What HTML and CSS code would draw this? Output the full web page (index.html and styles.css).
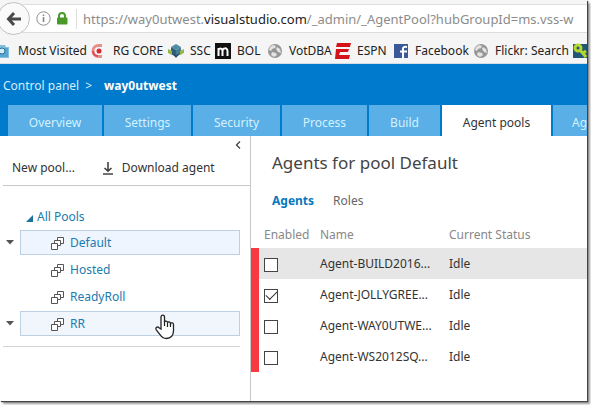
FILE: index.html
```html
<!DOCTYPE html>
<html lang="en">
<head>
<meta charset="utf-8">
<title>Agent pools</title>
<link rel="stylesheet" href="styles.css">
</head>
<body>
<div class="window">
  <div class="chrome">
    <div class="address-row">
      <button class="back" aria-label="Back"><svg width="16" height="16" viewBox="0 0 16 16"><path d="M8 2 2.500 8 8 14M3 8H15" fill="none" stroke="#4a4a4a" stroke-width="3"/></svg></button>
      <div class="address">
        <svg class="info" width="15" height="15" viewBox="0 0 15 15"><circle cx="7.500" cy="7.500" r="6.700" fill="none" stroke="#919191"/><path d="M7.500 6v5M7.500 3.500v1.500" stroke="#808080" stroke-width="1.500"/></svg>
        <svg class="lock" width="12" height="13" viewBox="0 0 12 13"><path d="M3 6V4a3 3 0 0 1 6 0v2" fill="none" stroke="#4a9a2a" stroke-width="2"/><rect x="1" y="5.500" width="10.500" height="7" rx="1" fill="#4a9a2a"/></svg>
        <span class="url">https://way0utwest.<b>visualstudio.com</b>/_admin/_AgentPool?hubGroupId=ms.vss-w</span>
      </div>
    </div>
    <nav class="bookmarks" aria-label="Bookmarks">
      <a href="#"><svg width="16" height="16" viewBox="0 0 16 16"><path d="M0 2h9l1 2h3v11H0z" fill="#80bfe0"/><path d="M0 5h12v9H0z" fill="#58a5d0"/><circle cx="6" cy="8" r="3" fill="#d5edf8" stroke="#286f9d"/><path d="m4 10-3 3" stroke="#286f9d" stroke-width="2"/></svg>Most Visited</a>
      <a href="#"><svg width="16" height="16" viewBox="0 0 16 16"><path d="M11 2.500H7.500a5.500 5.500 0 0 0 0 11H11" fill="none" stroke="#e88c8c" stroke-width="3"/><path d="M2 8a5 5 0 0 0 5 5" fill="none" stroke="#dc4c50" stroke-width="2"/><circle cx="8" cy="8" r="2.500" fill="#d42a32"/></svg>RG CORE</a>
      <a href="#"><svg width="16" height="16" viewBox="0 0 16 16"><path d="m8 1 5 3-5 3-5-3z" fill="#518ca5"/><path d="m3 4 5 3v7l-5-3z" fill="#315d76"/><path d="m13 4-5 3v7l5-3z" fill="#447c94"/><path d="m0 6 4 2v4l-4-2zm16 0-4 2v4l4-2z" fill="#95b748"/><path d="m4 10 4 2 4-2-4 5z" fill="#294f69"/></svg>SSC</a>
      <a href="#"><svg width="16" height="16" viewBox="0 0 16 16"><path d="M0 0h16v16H0z" fill="#111"/><path d="M3.500 13V5M3.500 7c1-2 4-2 4 1v5M7.500 8c0-3 5-4 5 0v5" fill="none" stroke="#fff" stroke-width="2"/></svg>BOL</a>
      <a href="#"><svg width="16" height="16" viewBox="0 0 16 16"><circle cx="8" cy="8" r="7" fill="#969696"/><path d="m3 4 3-2 3 1-1 2-3 1-1 2-2-1zm7 0 3 2 1 4-3-1-2-3zM5 9l4 1 1 2-3 2-3-2z" fill="#e3e3e3"/></svg>VotDBA</a>
      <a href="#"><svg width="16" height="16" viewBox="0 0 16 16"><path d="M2 0h14l-1 4H1zM1 6h13l-1 3H5l-1 3h11l-1 4H0z" fill="#d31319"/></svg>ESPN</a>
      <a href="#"><svg width="16" height="16" viewBox="0 0 16 16"><path d="M1 1h14v14H1z" fill="#3b5998"/><path d="M10 15V6c0-2 1-2.500 4-2M7 8.500h7" fill="none" stroke="#fff" stroke-width="2"/></svg>Facebook</a>
      <a href="#"><svg width="16" height="16" viewBox="0 0 16 16"><circle cx="8" cy="8" r="7" fill="#969696"/><path d="m3 4 3-2 3 1-1 2-3 1-1 2-2-1zm7 0 3 2 1 4-3-1-2-3zM5 9l4 1 1 2-3 2-3-2z" fill="#e3e3e3"/></svg>Flickr: Search</a>
      <a href="#" aria-label="Bookmark"><svg width="16" height="16" viewBox="0 0 16 16"><path d="M0 1h15v14H0z" fill="#205776"/><circle cx="5" cy="5" r="3" fill="none" stroke="#b6d52f" stroke-width="3"/><path d="m7 7 6 7M10 10l3-2" stroke="#b6d52f" stroke-width="3"/></svg></a>
    </nav>
  </div>
  <header class="hub">
    <div class="crumbs"><a href="#">Control panel</a><span>&gt;</span><strong>way0utwest</strong></div>
    <nav class="tabs" aria-label="Hubs">
      <a href="#">Overview</a><a href="#">Settings</a><a href="#">Security</a><a href="#">Process</a><a href="#">Build</a><a href="#" class="active" aria-current="page">Agent pools</a><a href="#" class="last">Ag</a>
    </nav>
  </header>
  <main class="content">
    <aside class="side">
      <div class="collapse-row"><button aria-label="Collapse"><svg width="6" height="8" viewBox="0 0 6 8"><path d="M5 .5 1.500 4 5 7.500" fill="none" stroke="#444" stroke-width="1.300"/></svg></button></div>
      <div class="toolbar">
        <button>New pool...</button>
        <button><svg width="10" height="13" viewBox="0 0 10 13"><path d="M5 0v9M1.500 6 5 9.200 8.500 6M0 12h10" fill="none" stroke="#444" stroke-width="1.600"/></svg>Download agent</button>
      </div>
      <div class="tree">
        <a class="root" href="#"><svg width="7" height="7" viewBox="0 0 7 7"><path d="M7 0v7H0z" fill="#1b7199"/></svg>All Pools</a>
        <div class="node selected"><button aria-label="Default menu"><svg width="8" height="5" viewBox="0 0 8 5"><path d="M0 0h8L4 4.500z" fill="#555"/></svg></button><a href="#"><svg width="13" height="13" viewBox="0 0 13 13"><g fill="#fff" stroke="#555"><path d="M6.500.5h6v6h-6z"/><path d="M3.500 3.500h6v5h-6z"/><path d="M.5 6.500h6v6h-6z"/></g></svg>Default</a></div>
        <div class="node"><a href="#"><svg width="13" height="13" viewBox="0 0 13 13"><g fill="#fff" stroke="#555"><path d="M6.500.5h6v6h-6z"/><path d="M3.500 3.500h6v5h-6z"/><path d="M.5 6.500h6v6h-6z"/></g></svg>Hosted</a></div>
        <div class="node"><a href="#"><svg width="13" height="13" viewBox="0 0 13 13"><g fill="#fff" stroke="#555"><path d="M6.500.5h6v6h-6z"/><path d="M3.500 3.500h6v5h-6z"/><path d="M.5 6.500h6v6h-6z"/></g></svg>ReadyRoll</a></div>
        <div class="node hovered"><button aria-label="RR menu"><svg width="8" height="5" viewBox="0 0 8 5"><path d="M0 0h8L4 4.500z" fill="#555"/></svg></button><a href="#"><svg width="13" height="13" viewBox="0 0 13 13"><g fill="#fff" stroke="#555"><path d="M6.500.5h6v6h-6z"/><path d="M3.500 3.500h6v5h-6z"/><path d="M.5 6.500h6v6h-6z"/></g></svg>RR</a>
          <svg class="pointer" width="20" height="26" viewBox="0 0 20 26"><path d="M6 15V3.200C6 .4 9.500.4 9.500 3.200V8c.5-1.300 3-1 3 .6.600-1.200 3-.8 3 .8.700-1 3-.6 3 1.200V17c0 4-2.500 7.500-7 7.500-3.500 0-5-1.500-6.500-4L1.300 15.800C0 13.500 2.500 12.200 4 13.700z" fill="#fff" stroke="#222" stroke-width="1.300"/><path d="M9.500 7v5M12.500 8.500V13M15.500 9.500V13" stroke="#222" stroke-width="1.200"/></svg></div>
      </div>
    </aside>
    <section class="pane">
      <h1>Agents for pool Default</h1>
      <nav class="views" aria-label="Views"><a href="#" class="current">Agents</a><a href="#">Roles</a></nav>
      <table>
        <thead><tr><th class="enabled">Enabled</th><th class="name">Name</th><th>Current Status</th></tr></thead>
        <tbody>
          <tr class="highlight"><td><input type="checkbox" aria-label="Enable Agent-BUILD2016"></td><td>Agent-BUILD2016...</td><td>Idle</td></tr>
          <tr><td><input type="checkbox" checked aria-label="Enable Agent-JOLLYGREE"></td><td>Agent-JOLLYGREE...</td><td>Idle</td></tr>
          <tr><td><input type="checkbox" aria-label="Enable Agent-WAY0UTWE"></td><td>Agent-WAY0UTWE...</td><td>Idle</td></tr>
          <tr><td><input type="checkbox" aria-label="Enable Agent-WS2012SQ"></td><td>Agent-WS2012SQ...</td><td>Idle</td></tr>
        </tbody>
      </table>
    </section>
  </main>
</div>
</body>
</html>
```
FILE: styles.css
```css
* { box-sizing: border-box; }
body {
  margin: 0;
  padding: 0 4px 4px 0;
  background: #fff;
  color: #333;
  font: 12px/16px "Noto Sans", "Open Sans", sans-serif;
  overflow: hidden;
}
a { color: inherit; text-decoration: none; }
button { padding: 0; border: 0; background: none; color: inherit; font: inherit; }
svg { display: block; flex: none; }
.window {
  display: flex;
  flex-direction: column;
  min-height: calc(100vh - 4px);
  overflow: hidden;
  background: #fff;
  box-shadow: 1px 1px 1px #444, 3px 3px 2px #999;
}
.chrome { height: 64px; background: #f5f5f5; border-bottom: 1px solid #d4dce4; }
.address-row { display: flex; align-items: center; height: 37px; }
.back {
  z-index: 1;
  flex: none;
  display: grid;
  place-items: center;
  width: 33px;
  height: 33px;
  margin-left: -3px;
  border: 1px solid #c0c0c0;
  border-radius: 50%;
  background: #fafafa;
}
.address {
  flex: 1;
  min-width: 0;
  display: flex;
  align-items: center;
  height: 29px;
  margin-left: -8px;
  padding-left: 14px;
  background: #fff;
  border: solid #ddd;
  border-width: 1px 0;
  overflow: hidden;
}
.lock { margin-left: 5px; }
.url {
  margin-left: 8px;
  padding-left: 6px;
  border-left: 1px solid #ddd;
  color: #8c8c8c;
  font-size: 13px;
  line-height: 20px;
  white-space: nowrap;
}
.url b { color: #222; font-weight: 400; }
.bookmarks {
  display: grid;
  grid-template-columns: 95px 77px 47px 52px 68px 58px 80px 100px 16px;
  margin-left: -4px;
  padding-top: 6px;
  color: #222;
}
.bookmarks a { display: flex; align-items: center; gap: 6px; white-space: nowrap; }
.hub { background: #007acc; color: #fff; }
.crumbs { display: flex; gap: 6px; height: 41px; padding: 14px 3px 0; }
.crumbs a, .crumbs span { color: #d5edff; }
.crumbs strong { margin-left: 6px; }
.tabs {
  display: grid;
  grid-template-columns: 94px 87px 87px 85px 71px 109px 1fr;
  gap: 2px;
  height: 31px;
  padding-left: 8px;
}
.tabs a {
  padding-top: 10px;
  background: #5aafe6;
  color: #d5f1ff;
  text-align: center;
  white-space: nowrap;
}
.tabs .active { background: #fff; color: #333; }
.tabs .last { min-width: 0; padding-left: 19px; text-align: left; }
.content { flex: 1; display: flex; }
.side { width: 251px; flex: none; border-right: 1px solid #c8c8c8; }
.collapse-row { display: flex; justify-content: flex-end; padding: 5px 9px 0 0; }
.toolbar {
  display: flex;
  align-items: flex-end;
  gap: 28px;
  height: 37px;
  margin-left: 3px;
  padding: 0 9px 9px;
  border-bottom: 1px solid #c8c8c8;
}
.toolbar button { display: flex; align-items: center; gap: 9px; }
.tree {
  margin: 23px 10px 0 3px;
  padding-bottom: 9px;
  border-bottom: 1px solid #d4d4d4;
  color: #207bae;
}
.root { display: flex; align-items: center; gap: 4px; height: 16px; margin: 0 0 4px 23px; }
.root svg { margin-top: 3px; }
.node { position: relative; display: flex; align-items: center; height: 27px; }
.node button { width: 17px; padding-left: 3px; }
.node a {
  flex: 1;
  display: flex;
  align-items: center;
  gap: 6px;
  height: 25px;
  margin-left: 17px;
  padding-left: 30px;
  border: 1px solid transparent;
}
.node button + a { margin-left: 0; }
.node a svg { margin-top: 2px; }
.selected a { background: #eff5ff; border-color: #bcd0e2; }
.hovered a { background: #f1f6fd; border-color: #bcd0e2; }
.pointer { position: absolute; left: 152px; top: 4px; }
.pane { flex: 1; min-width: 0; }
h1 { margin: 15px 0 0 21px; color: #444; font-size: 17px; font-weight: 400; line-height: 24px; }
.views { display: flex; gap: 19px; margin: 18px 0 0 21px; color: #666; }
.views .current { color: #0878bd; font-weight: 700; }
table { width: 100%; margin-top: 12px; border-collapse: separate; border-spacing: 0; table-layout: fixed; white-space: nowrap; }
th { height: 27px; padding: 0; color: #888; font-weight: 400; text-align: left; }
th:first-child { padding-left: 13px; }
.enabled { width: 69px; }
.name { width: 129px; }
td { height: 31px; padding: 0; }
td:first-child { padding-left: 5px; border-left: 8px solid #f83a40; }
.highlight { background: #e6e6e6; }
input {
  appearance: none;
  display: grid;
  place-items: center;
  width: 14px;
  height: 14px;
  margin: 2px 0 0;
  border: 1px solid #444;
  background: #fff;
}
input:checked::before {
  content: "";
  width: 10px;
  height: 5px;
  margin-bottom: 3px;
  border: solid #333;
  border-width: 0 0 1px 1px;
  transform: rotate(-45deg);
}
```
